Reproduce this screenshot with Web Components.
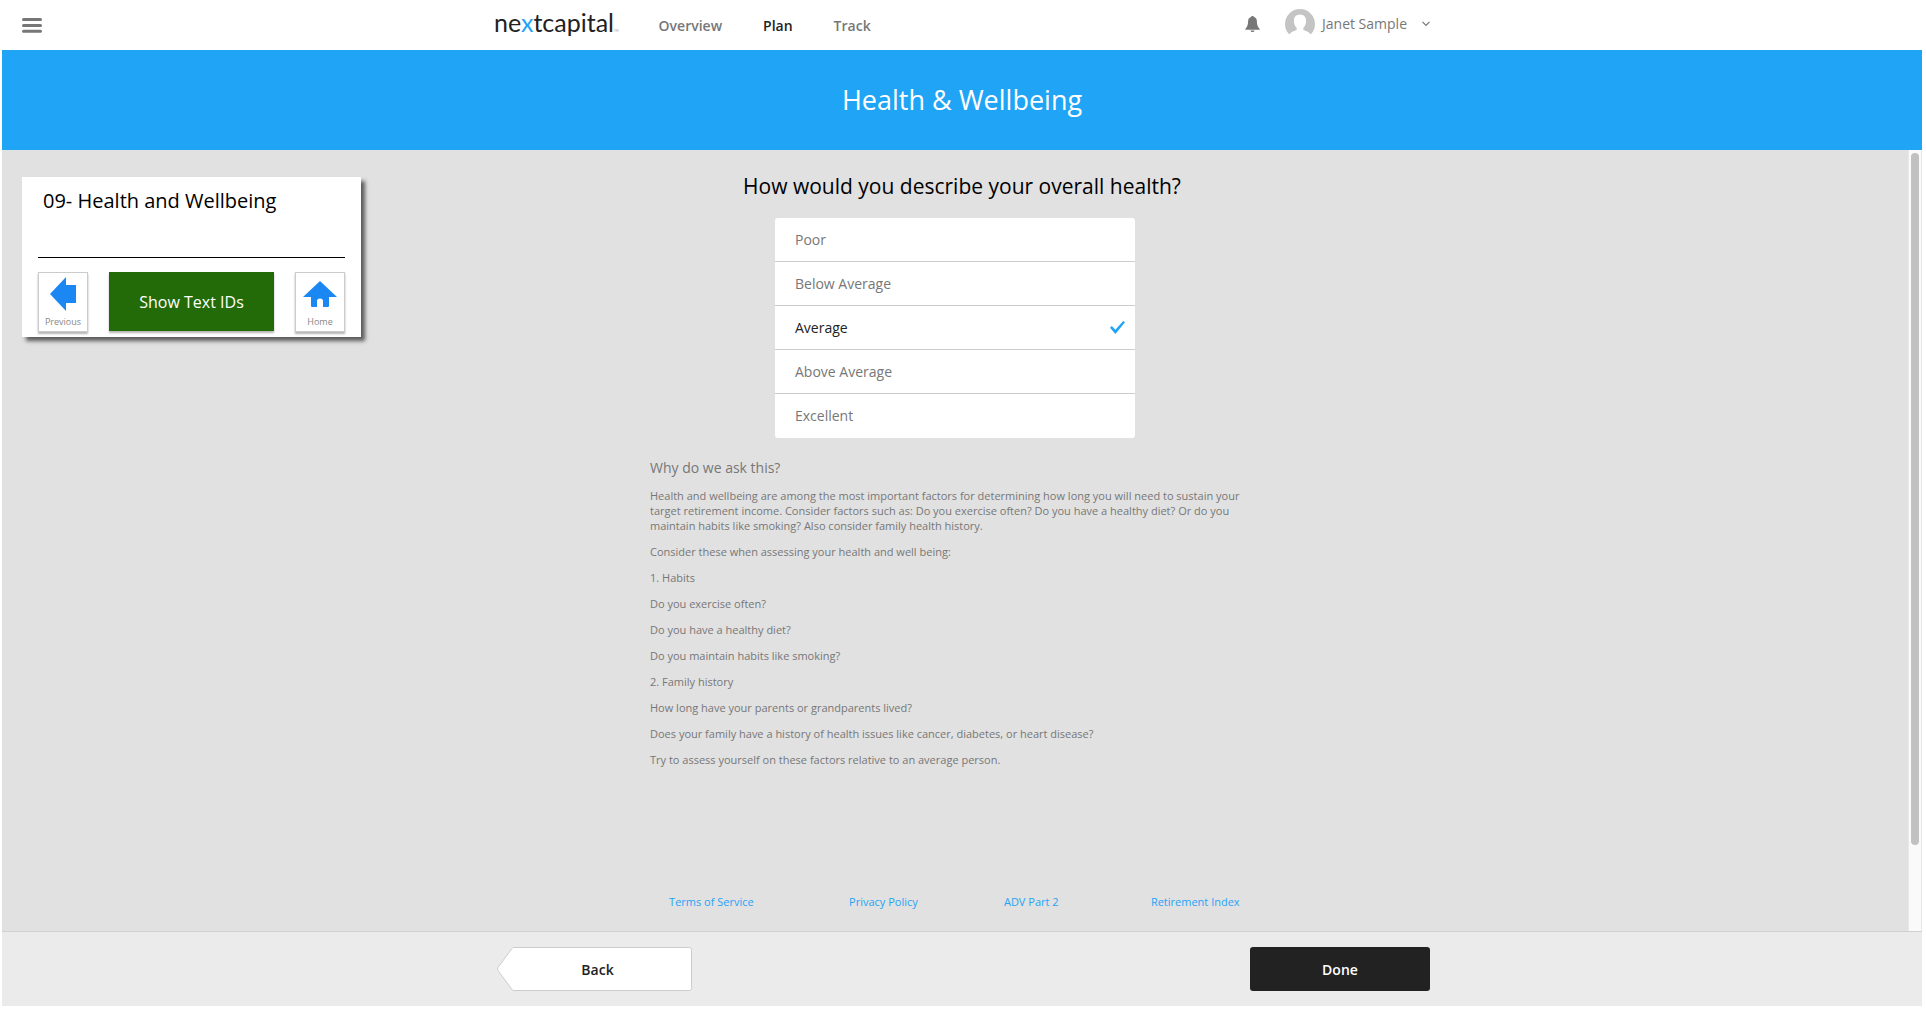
<!DOCTYPE html>
<html lang="en">
<head>
<meta charset="utf-8">
<title>Health &amp; Wellbeing</title>
<style>
  body { margin: 0; background: #fff; font-family: "Open Sans", "Noto Sans", sans-serif; color: #777; }
</style>
</head>
<body>
<plan-app>
  <site-header slot="header"></site-header>
  <page-banner slot="banner">Health &amp; Wellbeing</page-banner>
  <scroll-pane slot="main">
    <screen-card slot="aside" heading="09- Health and Wellbeing"></screen-card>
    <section-question>
      <span slot="question">How would you describe your overall health?</span>
      <choice-list label="How would you describe your overall health?" options="Poor|Below Average|Average|Above Average|Excellent" value="Average"></choice-list>
    </section-question>
    <help-text heading="Why do we ask this?">
      <p>Health and wellbeing are among the most important factors for determining how long you will need to sustain your target retirement income. Consider factors such as: Do you exercise often? Do you have a healthy diet? Or do you maintain habits like smoking? Also consider family health history.</p>
      <p>Consider these when assessing your health and well being:</p>
      <p>1. Habits</p>
      <p>Do you exercise often?</p>
      <p>Do you have a healthy diet?</p>
      <p>Do you maintain habits like smoking?</p>
      <p>2. Family history</p>
      <p>How long have your parents or grandparents lived?</p>
      <p>Does your family have a history of health issues like cancer, diabetes, or heart disease?</p>
      <p>Try to assess yourself on these factors relative to an average person.</p>
    </help-text>
    <legal-links></legal-links>
  </scroll-pane>
  <action-bar slot="footer"></action-bar>
</plan-app>

<script>
const define = (name, html, setup) => customElements.define(name, class extends HTMLElement {
  connectedCallback() {
    if (this.shadowRoot) return;
    const root = this.attachShadow({ mode: 'open' });
    root.innerHTML = '<style>:host,*{box-sizing:border-box}button{font:inherit;cursor:pointer}a{text-decoration:none}svg{display:block}</style>' + html;
    if (setup) setup(this, root);
  }
});

define('plan-app', `
<style>
  :host { display: flex; flex-direction: column; min-height: calc(100vh - 4px); margin: 0 4px 4px 2px; }
  ::slotted([slot=main]) { flex: 1; }
</style>
<slot name="header"></slot><slot name="banner"></slot><slot name="main"></slot><slot name="footer"></slot>`);

define('brand-logo', `
<style>
  :host { display: block; }
  a { display: flex; align-items: baseline; padding-top: 3px; font: 25px/30px Lato, sans-serif; color: #222; }
  b { font-weight: 400; color: #1fa4f6; }
  small { font-size: 3px; color: #999; }
</style>
<a href="#" aria-label="nextcapital"><span>ne<b>x</b>tcapital</span><small>TM</small></a>`);

define('site-header', `
<style>
  :host { display: block; background: #fff; font-size: 14px; line-height: 20px; }
  header { display: grid; grid-template-columns: 1fr minmax(0, 936px) 1fr; height: 50px; }
  .menu { justify-self: start; align-self: start; margin: 18px 0 0 20px; padding: 0; border: 0; background: none; }
  .bar { display: flex; align-items: center; justify-content: space-between; }
  .left, nav, .right, .user { display: flex; align-items: center; }
  .left { gap: 40px; }
  nav { gap: 41px; padding-top: 2px; font-weight: 600; }
  nav a { color: #777; }
  nav a[aria-current] { color: #222; }
  .right { gap: 25px; padding-bottom: 2px; }
  .right button { padding: 0; border: 0; background: none; color: #777; }
  .user span { margin: 0 15px 0 7px; }
</style>
<header>
  <button class="menu" aria-label="Menu"><svg width="20" height="15" stroke="#777" stroke-width="3" stroke-linecap="round"><path d="M1.5 1.5h17M1.5 7.5h17M1.5 13.3h17"/></svg></button>
  <div class="bar">
    <div class="left">
      <brand-logo></brand-logo>
      <nav><a href="#">Overview</a><a href="#" aria-current="page">Plan</a><a href="#">Track</a></nav>
    </div>
    <div class="right">
      <button aria-label="Notifications"><svg width="15" height="16" viewBox="0 0 15 16" fill="#777"><path d="M7.5 0C6.600 0 6.200.500 6 1.100C3.900 1.700 3.200 3.300 3.100 5.300C3 8.500 2.500 10.900.300 13.100V13.700H14.700V13.100C12.500 10.900 12 8.500 11.900 5.300C11.800 3.300 11.100 1.700 9 1.100C8.800.500 8.400 0 7.500 0ZM5.500 14.400C5.700 15.400 6.500 16 7.500 16S9.300 15.400 9.500 14.400Z"/></svg></button>
      <button class="user">
        <svg width="30" height="30" viewBox="0 0 30 30"><circle cx="15" cy="15" r="15" fill="#c4c4c4"/><path fill="#fff" d="M15 5.500C11 5.500 8.900 8.300 8.900 12C8.900 14.700 9.900 17.300 11.600 18.700V21C8 22.300 5.200 23.100 4 26V30H26V26C24.800 23.100 22 22.300 18.400 21V18.700C20.100 17.300 21.100 14.700 21.100 12C21.100 8.300 19 5.500 15 5.500Z"/></svg>
        <span>Janet Sample</span>
        <svg width="8" height="6" fill="none" stroke="#777" stroke-width="1.200"><path d="M.500.800 4 4.500 7.500.800"/></svg>
      </button>
    </div>
  </div>
</header>`);

define('page-banner', `
<style>
  :host { display: block; background: #1fa4f6; color: #fff; }
  h1 { margin: 0; font-size: 27px; font-weight: 400; line-height: 100px; text-align: center; }
</style>
<h1><slot></slot></h1>`);

define('scroll-pane', `
<style>
  :host { display: flex; background: #e1e1e1; }
  .view { flex: 1; display: grid; grid-template-columns: 1fr minmax(0, 610px) 1fr; }
  main { display: flex; flex-direction: column; }
  .track { width: 14px; padding: 3px 2px 0 2px; background: #fafafa; border: solid #e8e8e8; border-width: 0 1px; }
  .thumb { width: 8px; height: 89%; border-radius: 4px; background: #c1c1c1; }
</style>
<div class="view"><div><slot name="aside"></slot></div><main><slot></slot></main></div>
<div class="track"><div class="thumb"></div></div>`);

define('screen-card', `
<style>
  :host { display: block; width: 339px; margin: 27px 0 0 20px; padding: 0 16px 5px; background: #fff; box-shadow: 4px 4px 4px rgba(0,0,0,.6); color: #000; }
  h2 { height: 81px; margin: 0 0 14px; padding: 9px 5px 0; border-bottom: 1px solid #000; font-size: 20px; font-weight: 400; line-height: 30px; }
  .row { display: flex; justify-content: space-between; }
  button { display: flex; flex-direction: column; align-items: center; justify-content: space-between; width: 50px; height: 60px; padding: 4px 0 3px; border: 1px solid #ccc; background: #fff; box-shadow: 0 2px 2px rgba(0,0,0,.3); color: #888; font-size: 9px; line-height: 12px; }
  .show { justify-content: center; width: 165px; height: 59px; padding: 0; border: 0; background: #226b08; color: #fff; font-size: 16px; line-height: 22px; }
</style>
<h2></h2>
<div class="row">
  <button><svg width="26" height="34" fill="#1b87f3"><path d="M0 17 16 0V8H26V26H16V34Z"/></svg>Previous</button>
  <button class="show">Show Text IDs</button>
  <button><svg width="34" height="34" fill="#1b87f3"><path d="M17 4 34 20H26V29Q26 30 25 30H20V24Q20 21.500 17 21.500T14 24V30H9Q8 30 8 29V20H0Z"/></svg>Home</button>
</div>`, (el, root) => { root.querySelector('h2').textContent = el.getAttribute('heading'); });

define('section-question', `
<style>
  :host { display: block; padding-top: 21px; }
  h2 { margin: 0 0 17px; padding-left: 14px; color: #000; font-size: 21px; font-weight: 400; line-height: 30px; text-align: center; }
</style>
<h2><slot name="question"></slot></h2><slot></slot>`);

define('choice-list', `
<style>
  :host { display: block; max-width: 360px; margin: 0 auto; }
  fieldset { margin: 0; padding: 0; border: 0; border-radius: 3px; background: #fff; overflow: hidden; }
  label { display: flex; align-items: center; justify-content: space-between; height: 44px; padding: 0 10px 0 20px; border-bottom: 1px solid #ccc; font-size: 14px; line-height: 20px; cursor: pointer; }
  label:last-child { border-bottom: 0; }
  label:has(:checked) { color: #222; }
  input { appearance: none; width: 15px; height: 13px; margin: 0; }
  input:checked { background: #1fa4f6; clip-path: polygon(0 52%, 12% 38%, 36% 68%, 88% 0, 100% 10%, 36% 100%); }
</style>
<fieldset></fieldset>`, (el, root) => {
  const box = root.querySelector('fieldset');
  box.setAttribute('aria-label', el.getAttribute('label'));
  for (const name of el.getAttribute('options').split('|')) {
    const label = document.createElement('label');
    const input = document.createElement('input');
    input.type = 'radio';
    input.name = 'health';
    input.value = name;
    input.checked = name === el.getAttribute('value');
    label.append(name, input);
    box.append(label);
  }
});

define('help-text', `
<style>
  :host { display: block; margin-top: 20px; font-size: 11px; line-height: 15px; }
  h3 { margin: 0 0 10px; font-size: 14px; font-weight: 400; line-height: 20px; }
  ::slotted(p) { margin: 0 0 11px; }
</style>
<h3></h3><slot></slot>`, (el, root) => { root.querySelector('h3').textContent = el.getAttribute('heading'); });

define('legal-links', `
<style>
  :host { display: block; margin: auto -31px 22px; font-size: 11px; line-height: 15px; }
  nav { display: table; width: 100%; }
  a { display: table-cell; padding: 0 15px; text-align: center; color: #1fa4f6; }
</style>
<nav aria-label="Legal"><a href="#">Terms of Service</a><a href="#">Privacy Policy</a><a href="#">ADV Part 2</a><a href="#">Retirement Index</a></nav>`);

define('action-bar', `
<style>
  :host { display: block; background: #ebebeb; border-top: 1px solid #d0d0d0; }
  footer { display: flex; justify-content: space-between; max-width: 936px; margin: 0 auto; padding: 15px 0; font-size: 14px; font-weight: 600; line-height: 20px; }
  button { height: 44px; padding: 2px 0 0; border: 0; }
  .back { display: grid; width: 195px; margin-left: 3px; padding: 0; background: none; color: #222; }
  .back > * { grid-area: 1 / 1; place-self: center; }
  .back span { padding: 2px 0 0 6px; }
  .done { width: 180px; border-radius: 3px; background: #222; color: #fff; }
</style>
<footer>
  <button class="back"><svg width="195" height="44" fill="#fff" stroke="#ccc"><path d="M16.500.500H192.500Q194.500.500 194.500 2.500V41.500Q194.500 43.500 192.500 43.500H16.500Q16 43.500 15 42.500L1 23.500Q0 22 1 20.500L15 1.500Q15.800.500 16.500.500Z"/></svg><span>Back</span></button>
  <button class="done">Done</button>
</footer>`);
</script>
</body>
</html>
